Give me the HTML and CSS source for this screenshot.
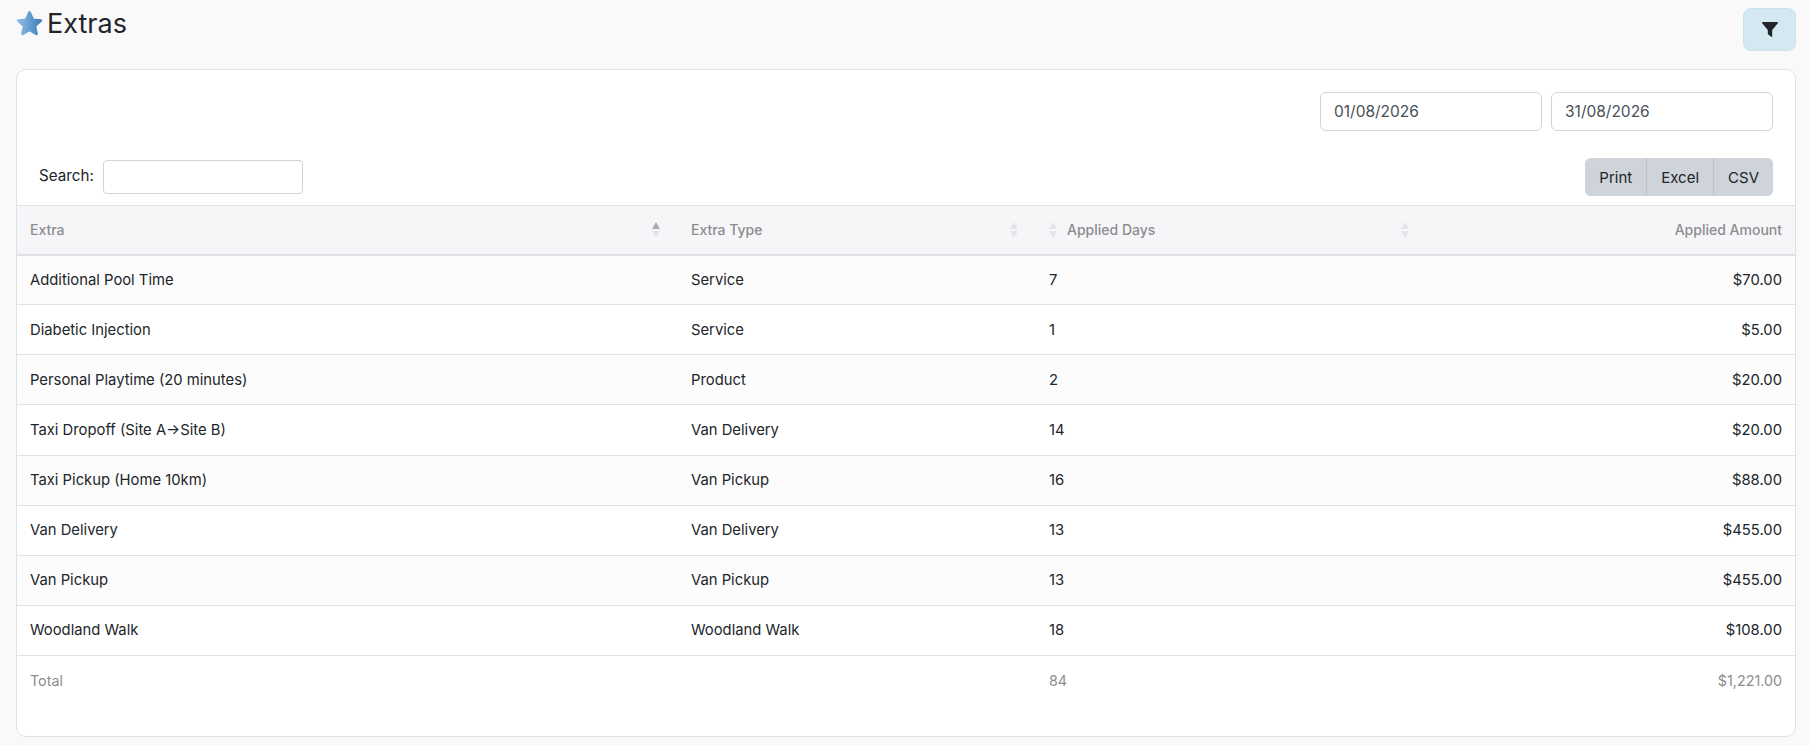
FILE: index.html
```html
<!DOCTYPE html>
<html lang="en">

<head>
    <meta charset="UTF-8">
    <title>Extras</title>
    <link rel="stylesheet" href="styles.css">
</head>

<body>

    <div class="page-head">
        <h2 class="page-title">
            <svg class="star" width="29" height="29" viewBox="0 0 26 26">
                <defs>
                    <linearGradient id="starFill" x1="0" y1="0" x2="1" y2="0">
                        <stop offset="0" stop-color="#8dbbe4" />
                        <stop offset="1" stop-color="#3f7fbd" />
                    </linearGradient>
                </defs>
                <path d="M13 3l3 6.600 7.200.8-5.400 4.800 1.500 7.100L13 18.700l-6.300 3.600 1.500-7.100-5.400-4.800 7.200-.8z"
                    fill="url(#starFill)" stroke="url(#starFill)" stroke-width="2.400" stroke-linejoin="round" />
            </svg>
            Extras
        </h2>
        <button class="filter-btn">
            <svg width="16" height="15" viewBox="0 0 16 15">
                <path d="M.8 0h14.400c.7 0 1 .8.600 1.300L10.200 8v6.300c0 .5-.6.800-1 .5L6.300 12.400c-.3-.2-.5-.5-.5-.8V8L.2 1.300C-.2.800.1 0 .8 0z"
                    fill="#212529" />
            </svg>
        </button>
    </div>

    <div class="card">
        <div class="date-row">
            <input class="date-input" type="text" value="01/08/2026">
            <input class="date-input" type="text" value="31/08/2026">
        </div>

        <div class="tools-row">
            <label class="search">Search: <input type="text"></label>
            <div class="btn-group">
                <button>Print</button>
                <button>Excel</button>
                <button>CSV</button>
            </div>
        </div>

        <table>
            <colgroup>
                <col class="col-extra">
                <col class="col-type">
                <col class="col-days">
                <col>
            </colgroup>
            <thead>
                <tr>
                    <th>
                        <div class="th-inner">Extra
                            <span class="sort"><i class="up on"></i><i class="down"></i></span>
                        </div>
                    </th>
                    <th>
                        <div class="th-inner">Extra Type
                            <span class="sort"><i class="up"></i><i class="down"></i></span>
                        </div>
                    </th>
                    <th>
                        <div class="th-inner num">
                            <span class="sort"><i class="up"></i><i class="down"></i></span>
                            Applied Days
                        </div>
                    </th>
                    <th>
                        <div class="th-inner num amount">
                            <span class="sort"><i class="up"></i><i class="down"></i></span>
                            Applied Amount
                        </div>
                    </th>
                </tr>
            </thead>
            <tbody>
                <tr>
                    <td>Additional Pool Time</td>
                    <td>Service</td>
                    <td>7</td>
                    <td class="right">$70.00</td>
                </tr>
                <tr>
                    <td>Diabetic Injection</td>
                    <td>Service</td>
                    <td>1</td>
                    <td class="right">$5.00</td>
                </tr>
                <tr>
                    <td>Personal Playtime (20 minutes)</td>
                    <td>Product</td>
                    <td>2</td>
                    <td class="right">$20.00</td>
                </tr>
                <tr>
                    <td>Taxi Dropoff (Site A→Site B)</td>
                    <td>Van Delivery</td>
                    <td>14</td>
                    <td class="right">$20.00</td>
                </tr>
                <tr>
                    <td>Taxi Pickup (Home 10km)</td>
                    <td>Van Pickup</td>
                    <td>16</td>
                    <td class="right">$88.00</td>
                </tr>
                <tr>
                    <td>Van Delivery</td>
                    <td>Van Delivery</td>
                    <td>13</td>
                    <td class="right">$455.00</td>
                </tr>
                <tr>
                    <td>Van Pickup</td>
                    <td>Van Pickup</td>
                    <td>13</td>
                    <td class="right">$455.00</td>
                </tr>
                <tr>
                    <td>Woodland Walk</td>
                    <td>Woodland Walk</td>
                    <td>18</td>
                    <td class="right">$108.00</td>
                </tr>
            </tbody>
            <tfoot>
                <tr>
                    <td>Total</td>
                    <td></td>
                    <td>84</td>
                    <td class="right">$1,221.00</td>
                </tr>
            </tfoot>
        </table>
    </div>

</body>

</html>
```

FILE: styles.css
```css
* {
    margin: 0;
    padding: 0;
    box-sizing: border-box;
    font-family: "Inter", "Noto Sans", sans-serif;
}

body {
    width: 1810px;
    height: 745px;
    padding: 8px 14px 0 16px;
    background-color: #f9f9f9;
    color: #212529;
    font-size: 14.8px;
    overflow: hidden;
}

.page-head {
    display: flex;
    justify-content: space-between;
    align-items: flex-start;
    height: 61px;
}

.page-title {
    display: flex;
    align-items: center;
    gap: 3px;
    height: 32px;
    font-size: 27px;
    font-weight: 400;
    line-height: 32px;
}

.star {
    margin: -1px 0 0 -1px;
}

.filter-btn {
    display: flex;
    justify-content: center;
    align-items: center;
    width: 53px;
    height: 43px;
    background-color: #d3e8f0;
    border: 1px solid #c9e3ec;
    border-radius: 8px;
}

.card {
    height: 668px;
    background-color: #fff;
    border: 1px solid #dee2e6;
    border-radius: 10px;
}

.date-row {
    display: flex;
    justify-content: flex-end;
    gap: 9px;
    padding: 22px 22px 0 0;
}

.date-input {
    width: 222px;
    height: 39px;
    padding: 0 13px 0 13px;
    border: 1px solid #ced4da;
    border-radius: 6px;
    font-size: 15.5px;
    color: #495057;
}

.tools-row {
    display: flex;
    justify-content: space-between;
    align-items: center;
    height: 38px;
    margin-top: 27px;
    padding: 0 22px;
}

.search {
    font-size: 15.2px;
}

.search input {
    width: 200px;
    height: 34px;
    margin-left: 5px;
    border: 1px solid #ced4da;
    border-radius: 4px;
    vertical-align: middle;
}

.btn-group {
    display: flex;
    height: 38px;
    border-radius: 6px;
    overflow: hidden;
    background-color: #ced4da;
}

.btn-group button {
    padding: 0 14px;
    border: none;
    background-color: #ced4da;
    color: #212529;
    font-size: 15px;
}

.btn-group button + button {
    border-left: 1px solid #bcc3ca;
}

table {
    width: 100%;
    margin-top: 9px;
    table-layout: fixed;
    border-collapse: collapse;
}

.col-extra {
    width: 662px;
}

.col-type {
    width: 358px;
}

.col-days {
    width: 352px;
}

th {
    height: 49px;
    background-color: #f6f6f8;
    border-top: 1px solid #dee2e6;
    border-bottom: 2px solid #dee2e6;
    color: #8b8d90;
    font-size: 14px;
    font-weight: 500;
    text-align: left;
}

th,
td {
    padding: 0 13px 0 12px;
}

th:first-child,
td:first-child {
    padding-left: 13px;
}

.th-inner {
    display: flex;
    justify-content: space-between;
    align-items: center;
    padding-right: 6px;
}

.th-inner.num {
    justify-content: flex-start;
    gap: 10px;
}

.th-inner.amount {
    justify-content: space-between;
    padding-right: 0;
}

.sort {
    display: flex;
    flex-direction: column;
    gap: 2px;
}

.sort i {
    display: block;
    width: 0;
    height: 0;
    border-left: 4.5px solid transparent;
    border-right: 4.5px solid transparent;
}

.sort .up {
    border-bottom: 7px solid #e3e5e8;
}

.sort .down {
    border-top: 7px solid #e3e5e8;
}

.sort .up.on {
    border-bottom-color: #a6a9ad;
}

td {
    height: 50.130px;
    border-bottom: 1px solid #dee2e6;
}

tbody tr:nth-child(odd) {
    background-color: #fcfcfc;
}

tfoot td {
    border-bottom: none;
    color: #8b8d90;
    font-size: 14.3px;
}

.right {
    text-align: right;
}
```
